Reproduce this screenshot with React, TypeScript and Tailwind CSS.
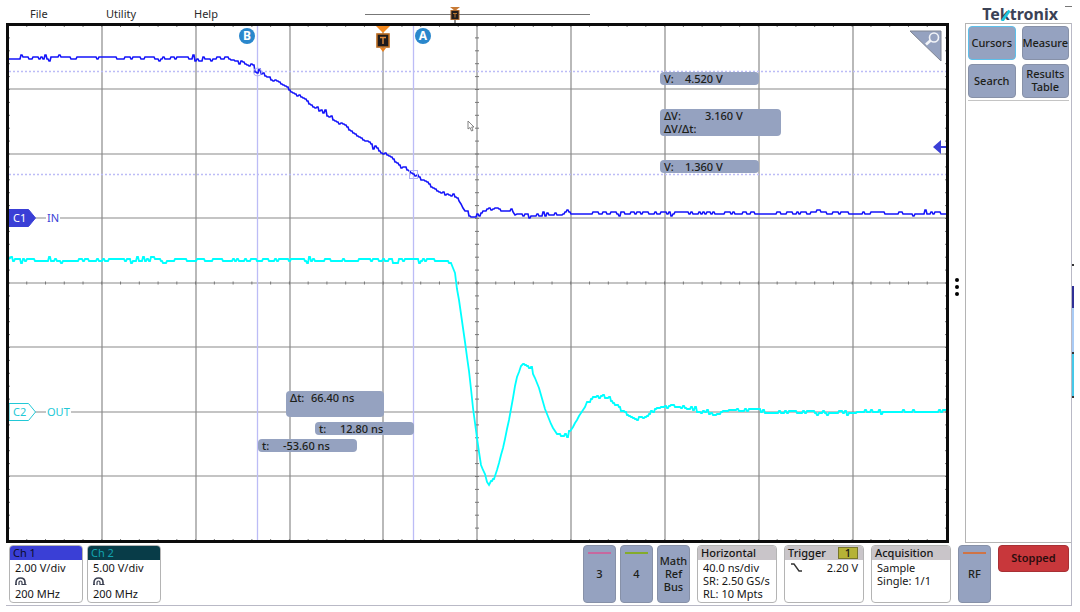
import type { ReactNode } from 'react';
import { clsx } from 'clsx';

type Point = [number, number];

// Size of the drawing area inside the black frame
const PLOT_W = 937;
const PLOT_H = 514;

const GRID_X = [93, 187, 281, 374, 468, 562, 656, 750, 844];
const GRID_Y = [63, 128, 192, 257, 321, 386, 450];
const MID_X = 468;
const MID_Y = 257;

const CH1_POINTS: Point[] = [
  [0, 33], [219, 33], [230, 36], [238, 39], [249, 46], [281, 65], [300, 78], [340, 104],
  [374, 128], [404, 148], [416, 157], [430, 166], [439, 171], [444, 170], [449, 173],
  [456, 185], [461, 191], [471, 190], [476, 185], [484, 183], [491, 185], [503, 185],
  [507, 190], [530, 190], [545, 189], [560, 188], [937, 188],
];

const CH2_POINTS: Point[] = [
  [0, 235], [441, 235], [443, 239], [446, 247], [447, 257], [450, 274], [454, 302], [461, 352],
  [463, 374], [468, 412], [472, 439], [476, 448], [477, 454], [480, 459], [484, 455], [488, 444],
  [494, 422], [501, 389], [507, 354], [512, 340], [516, 339], [522, 343], [529, 359], [537, 386],
  [543, 400], [548, 408], [553, 413], [561, 406], [569, 392], [577, 379], [584, 371], [591, 370],
  [600, 373], [609, 382], [614, 387], [628, 394], [636, 391], [643, 386], [656, 382], [667, 381],
  [681, 383], [688, 386], [703, 389], [716, 387], [731, 385], [748, 385], [757, 387], [937, 386],
];

// Small repeatable noise so the traces look sampled
function trace(points: Point[], seed: number) {
  let state = seed;
  const next = () => {
    state = (state * 48271) % 2147483647;
    return state / 2147483647;
  };
  let d = '';
  let seg = 0;
  let jitter = 0;
  for (let x = 0; x <= PLOT_W; x += 2) {
    while (seg < points.length - 2 && x > points[seg + 1][0]) seg++;
    const [x0, y0] = points[seg];
    const [x1, y1] = points[seg + 1];
    const slope = (y1 - y0) / (x1 - x0);
    const base = Math.round(y0 + slope * (x - x0));
    if (Math.abs(slope) > 1.2) {
      d += `L${x} ${base}`;
      continue;
    }
    const r = next();
    if (next() > 0.2) {
      jitter = r > 0.975 ? -4 : r > 0.55 ? -2 : r < 0.04 ? 2 : 0;
    }
    const y = base + jitter;
    d += x === 0 ? `M0 ${y}` : `L${x} ${y}h1`;
  }
  return d;
}

const CH1_PATH = trace(CH1_POINTS, 7193);
const CH2_PATH = trace(CH2_POINTS, 40211);

const X_TICKS = Array.from({ length: 50 }, (_, i) => MID_X + (i - 25) * 18.76);
const Y_TICKS = Array.from({ length: 40 }, (_, i) => MID_Y + (i - 20) * 12.9);

function at(x: number, y: number) {
  return { left: `${(x / PLOT_W) * 100}%`, top: `${(y / PLOT_H) * 100}%` };
}

function Graticule() {
  return (
    <svg
      className="absolute inset-0 h-full w-full"
      viewBox={`0 0 ${PLOT_W} ${PLOT_H}`}
      preserveAspectRatio="none"
      fill="none"
    >
      {/* Grid */}
      <g stroke="#8a8a8a" strokeWidth="1.2">
        {GRID_X.map((x) => (
          <line key={x} x1={x} x2={x} y1="0" y2={PLOT_H} />
        ))}
        {GRID_Y.map((y) => (
          <line key={y} x1="0" x2={PLOT_W} y1={y} y2={y} />
        ))}
      </g>
      <g stroke="#777777" strokeWidth="1">
        {X_TICKS.map((x) => (
          <path key={x} d={`M${x} ${MID_Y - 1.5}v3M${x} 0v1M${x} ${PLOT_H}v-1`} />
        ))}
        {Y_TICKS.map((y) => (
          <path key={y} d={`M${MID_X - 2} ${y}h4M0 ${y}h1M${PLOT_W} ${y}h-1`} />
        ))}
      </g>

      {/* Cursor lines */}
      <g stroke="#bcbcf6">
        <path d="M248.5 0V514M404.5 0V514" strokeWidth="1.3" />
        <path d="M0 45.5H937M0 148.5H937" strokeDasharray="2 2" strokeWidth="1.3" />
      </g>

      {/* Traces */}
      <path d={CH2_PATH} stroke="#00ffff" strokeWidth="1.8" />
      <path d={CH1_PATH} stroke="#1414fa" strokeWidth="1.6" />
      <circle cx="248.5" cy="46" r="4" stroke="#b0b0f4" />
      <rect x="400.5" y="144.5" width="8" height="8" stroke="#b0b0f4" />

      {/* Trigger level */}
      <path d="M924 121l8-7v6h5v2h-5v6z" fill="#3a3fd6" />
    </svg>
  );
}

function TriggerMarker() {
  return (
    <svg className="absolute -ml-[7px]" style={at(374, 0)} width="14" height="26" viewBox="0 0 14 26">
      <path d="M0 0h14L7 7z" fill="#f58a1f" />
      <path d="M4 22h6l-3 4z" fill="#e8801f" />
      <rect x="1" y="8" width="12" height="13" fill="#1d1a1c" stroke="#b8691f" strokeWidth="1.6" />
      <path d="M4 11.5h6M7 11.5v6.5" stroke="#e08a3a" strokeWidth="1.4" />
    </svg>
  );
}

function CursorBadge({ x, children }: { x: number; children: ReactNode }) {
  return (
    <span
      className="absolute -ml-2 flex size-4 items-center justify-center rounded-full bg-[#2a87cc] text-xs leading-4 font-bold text-white"
      style={at(x, 2)}
    >
      {children}
    </span>
  );
}

interface ReadoutProps {
  x: number;
  y: number;
  label: string;
  value: string;
  labelClass: string;
  boxClass: string;
  extra?: string;
}

function Readout({ x, y, label, value, labelClass, boxClass, extra }: ReadoutProps) {
  return (
    <div
      className={clsx('absolute rounded bg-[#95a2c0] px-1 text-[11px] leading-[13px] font-medium text-[#1c2018]', boxClass)}
      style={at(x, y)}
    >
      <div className="flex whitespace-pre">
        <span className={labelClass}>{label}</span>
        <span>{value}</span>
      </div>
      {extra && <div>{extra}</div>}
    </div>
  );
}

function ChannelTag({ y, id, name, solid }: { y: number; id: string; name: string; solid?: boolean }) {
  const color = solid ? '#3a3fd6' : '#22c8d6';
  return (
    <div className="absolute flex items-center text-[11px] leading-[18px]" style={{ ...at(0, y), color }}>
      <div className="relative h-[18px] w-[27px]">
        <svg className="absolute inset-0" width="27" height="18" viewBox="0 0 27 18">
          <path d="M0 .5h19.5L26.5 9l-7 8.5H0z" fill={solid ? color : '#ffffff'} stroke={color} />
        </svg>
        <span className={clsx('relative pl-1', solid && 'text-white')}>{id}</span>
      </div>
      <span className="ml-2.5 bg-white px-px leading-3">{name}</span>
    </div>
  );
}

function Scope() {
  return (
    <section className="relative flex-1 overflow-hidden border-3 border-[#0c0c0c] bg-white">
      <Graticule />
      <TriggerMarker />
      <CursorBadge x={238}>B</CursorBadge>
      <CursorBadge x={414}>A</CursorBadge>

      <ChannelTag y={183} id="C1" name="IN" solid />
      <ChannelTag y={377} id="C2" name="OUT" />

      <Readout x={651} y={46} label="V:" value="4.520 V" labelClass="w-[21px]" boxClass="h-[13px] w-[99px]" />
      <Readout x={651} y={83} label="ΔV:" value="3.160 V" extra="ΔV/Δt:" labelClass="w-[41px]" boxClass="h-[27px] w-[121px]" />
      <Readout x={651} y={134} label="V:" value="1.360 V" labelClass="w-[21px]" boxClass="h-[13px] w-[99px]" />
      <Readout x={277} y={365} label="Δt:" value="66.40 ns" labelClass="w-[21px]" boxClass="h-[26px] w-[98px]" />
      <Readout x={306} y={396} label="t:" value="12.80 ns" labelClass="w-[21px]" boxClass="h-[13px] w-[99px]" />
      <Readout x={249} y={413} label="t:" value="-53.60 ns" labelClass="w-[21px]" boxClass="h-[13px] w-[99px]" />

      {/* Zoom corner */}
      <button type="button" aria-label="Zoom" className="absolute top-1 right-1">
        <svg width="33" height="32" viewBox="0 0 33 32" fill="none">
          <path d="M1 1h31v30z" fill="#95a2c0" stroke="#7f8492" />
          <circle cx="25" cy="7.5" r="4.5" stroke="#f2f4f8" strokeWidth="1.6" />
          <path d="M21.5 10.5l-4.5 4" stroke="#f2f4f8" strokeWidth="2.8" />
        </svg>
      </button>

      {/* Mouse pointer */}
      <svg className="absolute" style={at(458, 94)} width="8" height="12" viewBox="0 0 8 12">
        <path d="M1 1v8l2-1.5L4.5 11l1.5-.6L4.7 7H7z" fill="#ffffff" stroke="#777777" strokeWidth=".9" />
      </svg>
    </section>
  );
}

function Header() {
  return (
    <header className="relative flex h-[23px] items-center pr-[22px] pl-6 text-[11px] text-[#2a2a2a]">
      <nav className="flex flex-1">
        <button type="button" className="w-[76px] pt-1.5 text-left">File</button>
        <button type="button" className="w-[88px] pt-1.5 text-left">Utility</button>
        <button type="button" className="w-[171px] pt-1.5 text-left">Help</button>
        <svg width="226" height="23" viewBox="0 0 226 23" fill="none">
          <path d="M0 14.5h225" stroke="#777777" />
          <path d="M85 7h10l-5 4z" fill="#c87a35" />
          <rect x="86" y="10.5" width="8" height="9" fill="#221c1c" stroke="#a8672f" />
          <path d="M88 13.5h4M90 13.5v4" stroke="#b8762f" />
          <path d="M90 20v3" stroke="#222222" />
        </svg>
      </nav>
      <div className="relative pt-1.5 text-base leading-[17px] font-bold text-[#3b4256]">
        Tektronix
        <svg className="absolute top-2 left-[18px]" width="11" height="13" viewBox="0 0 11 13">
          <path d="M9.5 2.5L2 13" stroke="#1fc3dc" strokeWidth="3" />
        </svg>
      </div>
      <span className="absolute top-1.5 right-2 h-px w-[7px] bg-[#777]" />
    </header>
  );
}

function SideButton({ children, active }: { children: ReactNode; active?: boolean }) {
  return (
    <button
      type="button"
      className={clsx(
        'flex h-[34px] items-center justify-center rounded border bg-[#95a2c0] pb-0.5 text-center text-[11px] leading-[13px] font-medium text-[#1c2018]',
        active ? 'border-[#5cc0ea]' : 'border-[#8791a8]'
      )}
    >
      {children}
    </button>
  );
}

function SidePanel() {
  return (
    <aside className="w-[106px] border-t border-b border-l border-[#b4b4b4] px-0.5 pt-0.5">
      <div className="grid grid-cols-2 gap-x-1.5 gap-y-1 border-b border-[#c4c4c4] pb-0.5">
        <SideButton active>Cursors</SideButton>
        <SideButton>Measure</SideButton>
        <SideButton>Search</SideButton>
        <SideButton>
          Results
          <br />
          Table
        </SideButton>
      </div>
    </aside>
  );
}

function Card({ title, titleClass, className, children }: {
  title: ReactNode;
  titleClass: string;
  className: string;
  children: ReactNode;
}) {
  return (
    <div className={clsx('h-[58px] overflow-hidden rounded border border-[#b4b4b4] text-[11px] leading-[13px] text-[#151515]', className)}>
      <div className={clsx('flex justify-between px-[3px] leading-[14px]', titleClass)}>{title}</div>
      <div className="px-[5px] pt-px">{children}</div>
    </div>
  );
}

function ProbeIcon() {
  return (
    <svg width="12" height="13" viewBox="0 0 12 13" fill="none" stroke="#3a3f50">
      <path d="M1 10V8.500C1 5.500 3 4 5.500 4S10 5.500 10 8.500V11" strokeWidth="1.6" />
      <path d="M4 11V8.500c0-2 3-2 3 0V11M7 10.500h4.500M0 10.500h2" strokeWidth="1.2" />
    </svg>
  );
}

function SlotButton({ label, bar }: { label: string; bar?: string }) {
  return (
    <button
      type="button"
      className="relative flex h-[58px] w-[33px] items-center justify-center rounded border border-[#8791a8] bg-[#95a2c0] pb-0.5 text-[11px] leading-[13px] font-medium whitespace-pre-line text-[#1c2018]"
    >
      {bar && <span className={clsx('absolute inset-x-1 top-1.5 h-0.5', bar)} />}
      {label}
    </button>
  );
}

function Footer() {
  return (
    <footer className="flex items-start gap-[7px] pt-0.5 pr-0.5 pb-0.5 pl-[3px]">
      <div className="flex flex-1 gap-1">
        <Card title="Ch 1" titleClass="bg-[#3a3fd6] text-[#0c0c28]" className="w-[74px]">
          <div>2.00 V/div</div>
          <ProbeIcon />
          <div>200 MHz</div>
        </Card>
        <Card title="Ch 2" titleClass="bg-[#083c48] text-[#12a3b0]" className="w-[74px]">
          <div>5.00 V/div</div>
          <ProbeIcon />
          <div>200 MHz</div>
        </Card>
      </div>
      <div className="flex gap-1">
        <SlotButton label="3" bar="bg-[#c7689f]" />
        <SlotButton label="4" bar="bg-[#84ab2b]" />
        <SlotButton label={'Math\nRef\nBus'} />
      </div>
      <Card title="Horizontal" titleClass="bg-[#c9c5c9] font-medium" className="w-20">
        <div>40.0 ns/div</div>
        <div>SR: 2.50 GS/s</div>
        <div>RL: 10 Mpts</div>
      </Card>
      <Card
        title={
          <>
            Trigger
            <span className="my-px mr-0.5 h-3 w-5 border border-[#77762a] bg-[#b5b236] text-center leading-[10px]">1</span>
          </>
        }
        titleClass="bg-[#c9c5c9] font-medium"
        className="w-20"
      >
        <div className="flex justify-between">
          <svg width="13" height="13" viewBox="0 0 13 13" fill="none">
            <path d="M1 3h3l5 7h3" stroke="#333333" strokeWidth="1.4" />
          </svg>
          2.20 V
        </div>
      </Card>
      <Card title="Acquisition" titleClass="bg-[#c9c5c9] font-medium" className="w-20">
        <div>Sample</div>
        <div>Single: 1/1</div>
      </Card>
      <SlotButton label="RF" bar="bg-[#cf7446]" />
      <button
        type="button"
        className="h-[27px] w-[71px] rounded border border-[#a83034] bg-[#c8373b] text-[11px] font-semibold text-[#2c0d0e]"
      >
        Stopped
      </button>
    </footer>
  );
}

export default function App() {
  return (
    <div className="flex min-h-screen flex-col bg-white pb-1.5 pl-1.5 font-['Noto_Sans',sans-serif]">
      <Header />
      <div className="flex flex-1 pr-1.5">
        <main className="flex flex-1 flex-col border-r border-b border-[#b9b9c6]">
          <div className="flex flex-1">
            <Scope />
            <button type="button" aria-label="More" className="flex w-4 flex-col items-center justify-center gap-[3px] pt-2">
              <span className="size-1 rounded-full bg-black" />
              <span className="size-1 rounded-full bg-black" />
              <span className="size-1 rounded-full bg-black" />
            </button>
            <SidePanel />
          </div>
          <Footer />
        </main>
        {/* Edge strip of the channel colours */}
        <div className="flex w-0.5 flex-col pt-[241px]">
          <span className="h-0.5 bg-[#333]" />
          <span className="mt-5 h-[22px] bg-[#2f2f96]" />
          <span className="h-11 bg-[#a9cbf5]" />
          <span className="h-0.5 bg-[#333]" />
          <span className="h-[42px] bg-[#46c8e8]" />
          <span className="h-0.5 bg-[#333]" />
        </div>
      </div>
    </div>
  );
}
